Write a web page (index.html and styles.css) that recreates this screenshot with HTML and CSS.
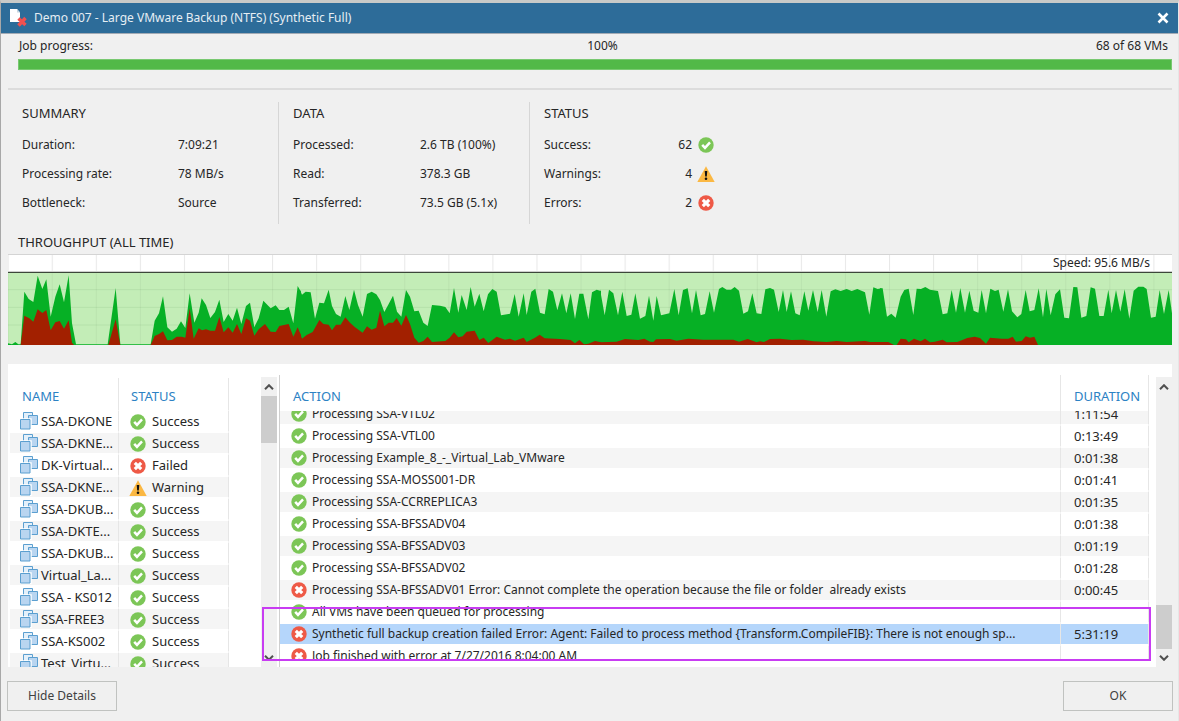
FILE: index.html
```html
<!DOCTYPE html>
<html lang="en">
<head>
<meta charset="utf-8">
<title>Demo 007 - Large VMware Backup (NTFS) (Synthetic Full)</title>
<link rel="stylesheet" href="styles.css">
</head>
<body>
<svg class="defs" aria-hidden="true">
  <symbol id="ok" viewBox="0 0 16 16"><circle cx="8" cy="8" r="7.7" fill="#7cc657"/><path d="M4.2 7.8l2.8 3 5-5.4" fill="none" stroke="#fff" stroke-width="2.5"/></symbol>
  <symbol id="fail" viewBox="0 0 16 16"><circle cx="8" cy="8" r="7.7" fill="#ee5946"/><path d="M4.8 4.8l6.4 6.4M11.2 4.8l-6.4 6.4" stroke="#fff" stroke-width="3.2"/></symbol>
  <symbol id="warn" viewBox="0 0 18 16"><path d="M9 .3L17.7 16H.3z" fill="#fbb843"/><path d="M7.7 5h2.6l-.5 5.6H8.2z" fill="#111"/><circle cx="9" cy="12.8" r="1.3" fill="#111"/></symbol>
  <symbol id="vm" viewBox="0 0 18 18"><g fill="#b9d5f0" stroke="#5b9fd0"><path d="M3.5 8V.5h9V5" fill="#e4f0fa"/><path d="M8.500 3.500h9v9h-9z"/><path d="M.5 7.500h10v10H.5z" stroke="#fff" stroke-width="2.500"/><path d="M.5 7.500h9.500v9.500H.5z"/></g></symbol>
  <symbol id="up" viewBox="0 0 10 6"><path d="M1 5.200l4-4 4 4" fill="none" stroke="#505050" stroke-width="2"/></symbol>
  <symbol id="down" viewBox="0 0 10 6"><path d="M1 .8l4 4 4-4" fill="none" stroke="#505050" stroke-width="2"/></symbol>
</svg>
<main class="dialog">
  <header class="titlebar">
    <svg class="doc-icon" viewBox="0 0 18 18"><path d="M1 0h7l3 3.500V13H1z" fill="#fff"/><path d="M8 0v3.500h3" fill="#c6d6e2"/><path d="M9.500 9.500l7 6.500M16.500 9l-7 7.500" stroke="#f0504f" stroke-width="3.400"/></svg>
    <h1>Demo 007 - Large VMware Backup (NTFS) (Synthetic Full)</h1>
    <button class="close" aria-label="Close"><svg viewBox="0 0 12 12"><path d="M1.500 1.500l9 9M10.500 1.500l-9 9" stroke="#fff" stroke-width="2.600"/></svg></button>
  </header>
  <section class="progress">
    <div class="progress-text"><span>Job progress:</span><span>100%</span><span>68 of 68 VMs</span></div>
    <div class="bar" role="progressbar" aria-valuenow="100" aria-label="Job progress"></div>
  </section>
  <section class="stats">
    <div class="stat">
      <h2>SUMMARY</h2>
      <dl><dt>Duration:</dt><dd>7:09:21</dd><dt>Processing rate:</dt><dd>78 MB/s</dd><dt>Bottleneck:</dt><dd>Source</dd></dl>
    </div>
    <div class="stat data">
      <h2>DATA</h2>
      <dl><dt>Processed:</dt><dd>2.6 TB (100%)</dd><dt>Read:</dt><dd>378.3 GB</dd><dt>Transferred:</dt><dd>73.5 GB (5.1x)</dd></dl>
    </div>
    <div class="stat state">
      <h2>STATUS</h2>
      <dl><dt>Success:</dt><dd>62<svg class="ico"><use href="#ok"/></svg></dd><dt>Warnings:</dt><dd>4<svg class="ico"><use href="#warn"/></svg></dd><dt>Errors:</dt><dd>2<svg class="ico"><use href="#fail"/></svg></dd></dl>
    </div>
  </section>
  <h2 class="throughput">THROUGHPUT (ALL TIME)</h2>
  <section class="chart">
    <svg class="plot" viewBox="24 12 3492 273" preserveAspectRatio="none" role="img" aria-label="Throughput">
      <defs><pattern id="cols" x="23" y="0" width="132.200" height="300" patternUnits="userSpaceOnUse"><path d="M1.500 0v300" stroke="#000" stroke-opacity=".09" stroke-width="3"/></pattern></defs>
      <path d="M24 12h3492v54H24z" fill="#fff"/>
      <path d="M24 66h3492v219H24z" fill="#c3edb7"/>
      <path d="M24 119h3492M24 172h3492M24 225h3492" stroke="#b5e1aa" stroke-width="3"/>
      <path d="M24 12h3492v50H24z" fill="url(#cols)"/>
      <path d="M24 70h3492v215H24z" fill="url(#cols)" opacity=".5"/>
      <g fill="#06b025">
        <polygon points="24,283 24,280 30,281 36,283 46,276 55,283 62,283 73,125 86,147 100,156 113,77 127,117 139,88 152,200 166,140 179,103 192,157 206,76 216,220 228,283 323,283 347,114 361,283 452,283 464,212 477,190 489,139 502,232 516,245 530,236 543,214 556,234 569,130 583,218 596,188 605,145 618,165 631,204 645,186 658,149 671,216 685,192 698,212 711,173 724,222 738,168 750,158 763,231 776,205 790,152 812,175 827,166 838,180 852,180 866,170 880,220 893,108 903,125 903,285 24,285"/>
        <polygon transform="translate(900)" points="0,285 0,120 6,134 17,125 32,127 45,206 58,158 72,160 86,119 96,168 108,192 122,200 136,138 148,180 162,119 174,165 188,200 201,132 215,125 229,133 240,150 253,186 266,162 279,137 291,185 304,200 318,120 330,140 343,184 356,182 370,218 383,228 396,165 420,167 436,171 449,190 462,114 475,188 485,135 500,180 512,111 524,170 538,131 551,184 564,133 577,117 590,125 603,196 630,191 644,132 656,200 671,130 680,195 694,125 706,116 720,188 734,193 746,117 759,125 772,181 786,130 799,190 812,130 825,207 838,131 850,131 865,208 876,127 890,119 903,123 903,285"/>
        <polygon transform="translate(1800)" points="0,285 0,118 14,196 27,119 40,130 54,196 67,125 80,198 94,194 106,130 120,206 136,198 147,137 160,212 170,138 183,196 208,190 223,117 236,196 249,120 263,115 276,190 288,120 302,196 315,192 329,124 342,188 357,117 367,111 380,119 393,119 404,111 417,122 430,191 444,184 457,130 470,190 484,192 496,118 510,114 522,119 536,186 549,120 560,186 573,124 586,190 599,196 613,124 625,182 639,120 653,186 665,120 679,200 692,124 706,118 722,123 740,117 755,123 772,117 795,127 808,194 820,112 833,117 844,115 844,285"/>
        <polygon transform="translate(2640)" points="0,285 0,115 8,115 21,200 34,191 47,203 62,140 73,120 86,116 100,195 110,116 123,117 136,111 150,119 174,123 188,193 202,190 215,120 228,188 241,114 255,188 268,122 281,182 295,188 305,120 318,190 331,116 345,123 356,119 370,185 384,118 396,184 412,202 424,192 437,120 449,184 463,180 476,115 489,202 499,117 512,196 526,133 540,118 553,203 567,205 580,111 592,112 604,203 619,198 632,112 645,116 658,198 671,198 685,119 695,190 708,120 721,185 734,118 748,206 761,122 775,110 790,110 800,117 813,203 827,200 839,120 852,192 866,120 876,190 876,285"/>
      </g>
      <g fill="#a22000">
        <polygon points="62,285 73,197 88,205 100,215 113,178 127,189 139,180 152,241 166,217 179,213 192,236 206,211 216,278 222,285 325,285 347,208 361,285 452,285 464,258 477,252 489,244 502,271 516,270 530,260 545,260 556,263 569,175 581,266 596,235 606,241 618,238 631,242 645,242 658,201 671,247 685,232 698,248 711,222 724,252 738,205 750,212 763,257 776,238 795,222 812,245 827,246 838,228 866,222 880,260 893,232 903,256 903,285"/>
        <polygon transform="translate(900)" points="0,285 0,250 6,266 20,255 38,246 58,210 70,222 86,224 96,241 108,224 122,224 136,202 150,218 165,232 188,248 201,229 215,239 229,233 240,182 253,229 266,218 279,218 290,204 304,227 318,195 330,222 343,263 356,278 370,273 383,260 396,276 436,273 449,263 462,247 475,262 488,259 500,245 524,242 538,270 551,263 565,279 590,260 615,269 630,266 645,272 671,263 680,276 705,263 719,254 734,265 780,267 812,270 825,280 838,270 852,283 865,281 885,273 903,277 903,285"/>
        <polygon transform="translate(1800)" points="0,285 0,277 50,275 75,267 115,270 133,266 150,275 160,276 168,268 210,267 230,272 265,266 310,269 400,269 417,275 443,267 470,277 480,274 492,276 510,267 540,266 575,270 610,269 640,274 680,276 710,273 740,276 795,273 810,276 865,276 882,285"/>
        <polygon transform="translate(2640)" points="50,285 62,266 78,268 86,277 102,266 122,274 135,266 150,277 165,275 188,269 200,277 232,276 262,264 284,260 300,264 318,281 330,263 365,266 385,266 398,260 408,275 425,273 437,259 450,263 463,260 474,285"/>
      </g>
      <path d="M24 67h3492" stroke="#3c463a" stroke-width="4"/>
      <path d="M24 13.500h3492" stroke="#d4d4d4" stroke-width="3"/>
    </svg>
    <span class="speed">Speed: 95.6 MB/s</span>
  </section>
  <section class="panel">
    <div class="list">
      <table class="vms">
        <thead><tr><th>NAME</th><th>STATUS</th></tr></thead>
        <tbody>
          <tr><td><svg class="vm"><use href="#vm"/></svg>SSA-DKONE</td><td><svg class="ico"><use href="#ok"/></svg>Success</td></tr>
          <tr><td><svg class="vm"><use href="#vm"/></svg>SSA-DKNE...</td><td><svg class="ico"><use href="#ok"/></svg>Success</td></tr>
          <tr><td><svg class="vm"><use href="#vm"/></svg>DK-Virtual...</td><td><svg class="ico"><use href="#fail"/></svg>Failed</td></tr>
          <tr><td><svg class="vm"><use href="#vm"/></svg>SSA-DKNE...</td><td><svg class="ico"><use href="#warn"/></svg>Warning</td></tr>
          <tr><td><svg class="vm"><use href="#vm"/></svg>SSA-DKUB...</td><td><svg class="ico"><use href="#ok"/></svg>Success</td></tr>
          <tr><td><svg class="vm"><use href="#vm"/></svg>SSA-DKTE...</td><td><svg class="ico"><use href="#ok"/></svg>Success</td></tr>
          <tr><td><svg class="vm"><use href="#vm"/></svg>SSA-DKUB...</td><td><svg class="ico"><use href="#ok"/></svg>Success</td></tr>
          <tr><td><svg class="vm"><use href="#vm"/></svg>Virtual_La...</td><td><svg class="ico"><use href="#ok"/></svg>Success</td></tr>
          <tr><td><svg class="vm"><use href="#vm"/></svg>SSA - KS012</td><td><svg class="ico"><use href="#ok"/></svg>Success</td></tr>
          <tr><td><svg class="vm"><use href="#vm"/></svg>SSA-FREE3</td><td><svg class="ico"><use href="#ok"/></svg>Success</td></tr>
          <tr><td><svg class="vm"><use href="#vm"/></svg>SSA-KS002</td><td><svg class="ico"><use href="#ok"/></svg>Success</td></tr>
          <tr><td><svg class="vm"><use href="#vm"/></svg>Test_Virtu...</td><td><svg class="ico"><use href="#ok"/></svg>Success</td></tr>
        </tbody>
      </table>
    </div>
    <div class="scroll at-top"><svg><use href="#up"/></svg><div class="thumb"></div><svg class="end"><use href="#down"/></svg></div>
    <div class="log">
      <div class="cols" aria-hidden="true"><span>ACTION</span><span>DURATION</span></div>
      <div class="log-body">
        <table class="actions" aria-label="Actions and durations">
          <tbody>
            <tr><td><svg class="ico"><use href="#ok"/></svg>Processing SSA-VTL02</td><td>1:11:54</td></tr>
            <tr><td><svg class="ico"><use href="#ok"/></svg>Processing SSA-VTL00</td><td>0:13:49</td></tr>
            <tr><td><svg class="ico"><use href="#ok"/></svg>Processing Example_8_-_Virtual_Lab_VMware</td><td>0:01:38</td></tr>
            <tr><td><svg class="ico"><use href="#ok"/></svg>Processing SSA-MOSS001-DR</td><td>0:01:41</td></tr>
            <tr><td><svg class="ico"><use href="#ok"/></svg>Processing SSA-CCRREPLICA3</td><td>0:01:35</td></tr>
            <tr><td><svg class="ico"><use href="#ok"/></svg>Processing SSA-BFSSADV04</td><td>0:01:38</td></tr>
            <tr><td><svg class="ico"><use href="#ok"/></svg>Processing SSA-BFSSADV03</td><td>0:01:19</td></tr>
            <tr><td><svg class="ico"><use href="#ok"/></svg>Processing SSA-BFSSADV02</td><td>0:01:28</td></tr>
            <tr><td><svg class="ico"><use href="#fail"/></svg>Processing SSA-BFSSADV01 Error: Cannot complete the operation because the file or folder &nbsp;already exists</td><td>0:00:45</td></tr>
            <tr><td><svg class="ico"><use href="#ok"/></svg>All VMs have been queued for processing</td><td></td></tr>
            <tr class="selected"><td><svg class="ico"><use href="#fail"/></svg>Synthetic full backup creation failed Error: Agent: Failed to process method {Transform.CompileFIB}: There is not enough sp...</td><td>5:31:19</td></tr>
            <tr><td><svg class="ico"><use href="#fail"/></svg>Job finished with error at 7/27/2016 8:04:00 AM</td><td></td></tr>
          </tbody>
        </table>
      </div>
    </div>
    <div class="scroll at-bottom"><svg><use href="#up"/></svg><div class="thumb"></div><svg class="end"><use href="#down"/></svg></div>
    <div class="highlight"></div>
  </section>
  <footer><button>Hide Details</button><button>OK</button></footer>
</main>
</body>
</html>
```
FILE: styles.css
```css
* { box-sizing: border-box; }
body {
  margin: 0;
  background: #f0f0f0;
  color: #262626;
  font: 12px/18px "Noto Sans", "Open Sans", sans-serif;
}
h1, h2, dl, dd { margin: 0; font-size: 12px; font-weight: 400; }
h2 { font-size: 13px; line-height: 16px; padding-bottom: 2px; }
button { font: inherit; color: #404040; }
.defs { position: absolute; width: 0; height: 0; }
.dialog {
  display: flex;
  flex-direction: column;
  height: 100vh;
  min-height: 480px;
  border-top: 3px solid #c8cac8;
  border-left: 1px solid #a8a8a8;
  border-right: 1px solid #e6e6e6;
}
.titlebar {
  display: flex;
  align-items: center;
  height: 31px;
  padding: 0 9px 0 8px;
  flex: none;
  background: #2d6c99;
  border-bottom: 1px solid #a3abb5;
  color: #e6eef4;
}
.titlebar h1 { flex: 1; }
.doc-icon { width: 18px; height: 18px; margin-right: 7px; }
.close { display: flex; padding: 0; border: 0; background: none; }
.close svg { width: 12px; height: 12px; }

.progress { margin: 0 6px 0 7px; padding: 3px 0 18px 10px; border-bottom: 2px solid #dcdcdc; }
.progress-text { display: grid; grid-template-columns: 1fr auto 1fr; padding: 0 4px 0 1px; }
.progress-text span:nth-child(2) { padding-left: 18px; }
.progress-text span:last-child { text-align: right; }
.bar { height: 11px; margin-top: 4px; background: #52b948; border: 1px solid #79c971; }

.stats { display: flex; margin-top: 12px; padding-left: 7px; }
.stat { height: 122px; padding: 3px 0 0 14px; width: 271px; border-right: 1px solid #d6d6d6; }
.stat dl { display: grid; grid-template-columns: 156px 1fr; grid-auto-rows: 29px; align-items: center; margin-top: 7px; }
.stat.data { width: 251px; }
.stat.data dl { grid-template-columns: 127px 1fr; }
.stat.state { flex: 1; border: 0; }
.stat.state dl { grid-template-columns: 108px 63px; }
.state dd { display: flex; justify-content: flex-end; align-items: center; gap: 5px; }
.ico { width: 18px; height: 16px; flex: none; }

.throughput { margin: 10px 0 2px 17px; }
.chart { display: flex; position: relative; height: 91px; margin: 0 6px 0 7px; flex: none; }
.plot { width: 100%; height: 100%; display: block; }
.speed { position: absolute; top: 0; right: 22px; }

.panel {
  display: flex;
  position: relative;
  flex: 1;
  min-height: 0;
  margin: 19px 6px 0 7px;
  background: #fff;
  overflow: hidden;
}
table { border-collapse: separate; border-spacing: 0; table-layout: fixed; width: 100%; }
th, td { text-align: left; font-weight: 400; padding: 0; white-space: nowrap; }
td { height: 22px; line-height: 20px; border: solid transparent; border-width: 1px 0; background-clip: padding-box; }
td svg { vertical-align: -4px; }
th, .cols { color: #2c82c4; font-size: 13px; }
.list { width: 221px; padding: 14px 0 0 2px; overflow: hidden; }
.vms th { height: 32px; padding: 4px 0 0 12px; border-right: 1px solid #e6e6e6; }
.vms th:first-child { width: 109px; }
.vms td { padding-left: 10px; border-right: 1px solid #e6e6e6; font-size: 13px; }
.vms tr:nth-child(even) td { background-color: #f5f5f5; }
.vms .ico { margin-right: 5px; }
.vm { width: 18px; height: 18px; margin-right: 3px; }

.scroll { display: flex; flex-direction: column; align-items: center; width: 16px; margin-top: 13px; padding: 7px 0 6px; background: #f0f0f0; }
.scroll svg { width: 10px; height: 6px; flex: none; }
.scroll .thumb { width: 16px; height: 47px; background: #cdcdcd; }
.at-top { margin-left: 32px; }
.at-top .thumb { margin: 6px 0 auto; }
.at-bottom .thumb { margin: auto 0 6px; height: 44px; }

.log {
  display: flex;
  flex-direction: column;
  flex: 1;
  min-width: 0;
  margin: 11px 7px 0 2px;
  padding-bottom: 7px;
  border-left: 1px solid #cfcfcf;
}
.cols { display: grid; grid-template-columns: 1fr 88px; height: 36px; line-height: 20px; }
.cols span { padding: 11px 0 0 13px; border-right: 1px solid #e6e6e6; }
.log-body { flex: 1; min-height: 0; overflow: hidden; }
.actions { margin-top: -8px; }
.actions td { border-right: 1px solid #e6e6e6; }
.actions td:first-child { padding-left: 10px; }
.actions td:last-child { width: 88px; padding-left: 13px; font-size: 13px; }
.actions tr:nth-child(odd) td { background-color: #f5f5f5; }
.actions tr.selected td { background-color: #b5d6fb; }
.actions tr:last-child td { background: none; }
.actions .ico { margin-right: 4px; }
.highlight { position: absolute; left: 254px; right: 21px; bottom: 6px; height: 54px; border: 2px solid #c83cf2; }

footer { display: flex; justify-content: space-between; flex: none; padding: 14px 5px 10px 6px; }
footer button { width: 110px; height: 30px; padding: 0; background: #f0f0f0; border: 1px solid #c0c2c0; }
```
